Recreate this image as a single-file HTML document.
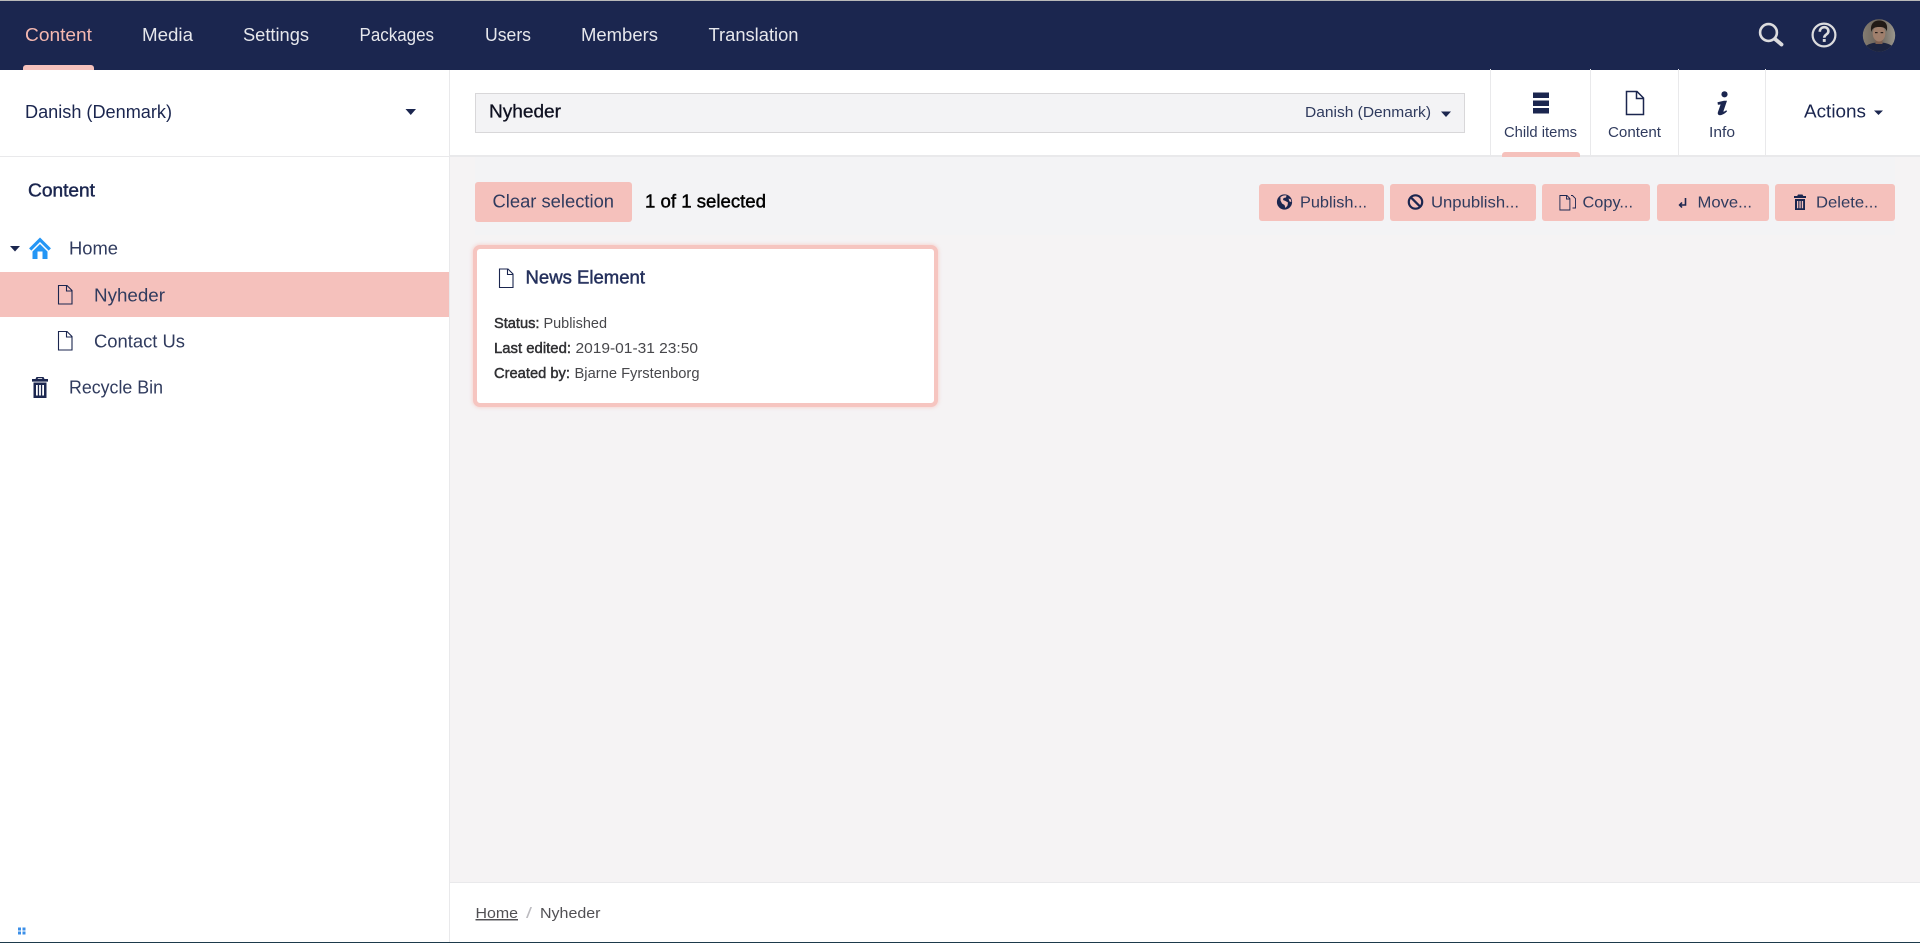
<!DOCTYPE html>
<html lang="en">
<head>
<meta charset="utf-8">
<title>Content</title>
<style>
html,body{margin:0;padding:0;width:1920px;height:943px;overflow:hidden;background:#fff}
div{position:absolute;box-sizing:border-box}
svg{position:absolute;left:0;top:0}
text{font-family:"Liberation Sans",sans-serif;font-size:18.4px;fill:#303b5e}
.nav{fill:#e6e7ec}
.small{font-size:14.7px}
.b{stroke-width:.45}
</style>
</head>
<body>
<!-- frame -->
<div style="left:0;top:0;width:1920px;height:70px;background:#1b264f;border-top:1px solid #b9b9b9"></div>
<div style="left:23px;top:65px;width:71px;height:5px;background:#f5c1bc;border-radius:3px 3px 0 0"></div>
<!-- main area -->
<div style="left:449px;top:70px;width:1px;height:872px;background:#e9e9eb"></div>
<div style="left:0;top:156px;width:450px;height:1px;background:#e9e9eb"></div>
<div style="left:450px;top:157px;width:1470px;height:725px;background:#f5f3f4"></div>
<div style="left:450px;top:155px;width:1470px;height:2px;background:#e9e9eb"></div>
<div style="left:475px;top:157px;width:1420px;height:78px;background:#f3f3f5"></div>
<div style="left:450px;top:882px;width:1470px;height:1px;background:#e9e9eb"></div>
<div style="left:0;top:941.5px;width:1920px;height:1.5px;background:#1d3a4b"></div>
<!-- name input -->
<div style="left:475px;top:93px;width:990px;height:40px;background:#f3f3f5;border:1px solid #d8d7d9"></div>
<!-- tabs -->
<div style="left:1490px;top:69px;width:1px;height:87px;background:#e9e9eb"></div>
<div style="left:1590px;top:69px;width:1px;height:87px;background:#e9e9eb"></div>
<div style="left:1678px;top:69px;width:1px;height:87px;background:#e9e9eb"></div>
<div style="left:1765px;top:69px;width:1px;height:87px;background:#e9e9eb"></div>
<div style="left:1502px;top:152px;width:78px;height:5px;background:#f5c1bc;border-radius:3px 3px 0 0"></div>
<!-- tree selection -->
<div style="left:0;top:272px;width:449px;height:45px;background:#f5c1bc"></div>
<!-- toolbar buttons -->
<div style="left:475px;top:182px;width:157px;height:40px;background:#f5c1bc;border-radius:3px"></div>
<div style="left:1259px;top:184px;width:125px;height:37px;background:#f5c1bc;border-radius:3px"></div>
<div style="left:1390px;top:184px;width:146px;height:37px;background:#f5c1bc;border-radius:3px"></div>
<div style="left:1542px;top:184px;width:108px;height:37px;background:#f5c1bc;border-radius:3px"></div>
<div style="left:1657px;top:184px;width:112px;height:37px;background:#f5c1bc;border-radius:3px"></div>
<div style="left:1775px;top:184px;width:119.5px;height:37px;background:#f5c1bc;border-radius:3px"></div>
<!-- card -->
<div style="left:473px;top:245px;width:465px;height:162px;background:#fff;border:4px solid #f6c5c0;border-radius:7px;box-shadow:0 0 3px 1px rgba(245,193,188,.55)"></div>

<svg width="1920" height="943" viewBox="0 0 1920 943" xmlns="http://www.w3.org/2000/svg">
<!-- nav -->
<text x="25" y="41" textLength="67" lengthAdjust="spacingAndGlyphs" style="fill:#f5b8b0">Content</text>
<text class="nav" x="142" y="41" textLength="51" lengthAdjust="spacingAndGlyphs">Media</text>
<text class="nav" x="243" y="41" textLength="66" lengthAdjust="spacingAndGlyphs">Settings</text>
<text class="nav" x="359.5" y="41" textLength="74.5" lengthAdjust="spacingAndGlyphs">Packages</text>
<text class="nav" x="485" y="41" textLength="46" lengthAdjust="spacingAndGlyphs">Users</text>
<text class="nav" x="581" y="41" textLength="77" lengthAdjust="spacingAndGlyphs">Members</text>
<text class="nav" x="708.5" y="41" textLength="90" lengthAdjust="spacingAndGlyphs">Translation</text>

<!-- search -->
<g fill="none" stroke="#dcdcde">
<circle cx="1768.500" cy="32.500" r="8.400" stroke-width="2.600"/>
<path d="M1775 39L1781.500 44.500" stroke-width="3.800" stroke-linecap="round"/>
</g>
<!-- help -->
<circle cx="1824" cy="35" r="11.400" fill="none" stroke="#dcdcde" stroke-width="2.200"/>
<path d="M1819.800 31.800c0-6 8.600-6 8.600-.6 0 3.400-4.200 3.200-4.200 6.600" fill="none" stroke="#dcdcde" stroke-width="2.600"/>
<rect x="1822.800" y="39" width="2.900" height="2.900" fill="#dcdcde"/>
<!-- avatar -->
<defs>
<clipPath id="av"><circle cx="1879" cy="35.500" r="16.200"/></clipPath>
<linearGradient id="avbg" x1="0" x2="1" y1="0" y2="0"><stop offset="0" stop-color="#857e73"/><stop offset=".5" stop-color="#6b6259"/><stop offset="1" stop-color="#9d9a90"/></linearGradient>
</defs>
<g clip-path="url(#av)">
<rect x="1862" y="19" width="34" height="33" fill="url(#avbg)"/>
<path d="M1862 53c1-8 9-10.500 17-10.500s16 2.500 17 10.500z" fill="#1c2440"/>
<rect x="1875.500" y="38" width="7" height="6" fill="#7d5f50"/>
<ellipse cx="1879" cy="33.500" rx="6.300" ry="8" fill="#a07f6c"/>
<path d="M1871.300 32c-1.500-8 2.500-11.500 8-11.500s9 3 7.500 11c-1-3.500-3-4.500-7.500-4.500s-7 1-8 5z" fill="#211a16"/>
<rect x="1875" y="32" width="2.600" height="1.200" fill="#2a211c"/>
<rect x="1880.600" y="32" width="2.600" height="1.200" fill="#2a211c"/>
</g>

<!-- sidebar header -->
<text x="25" y="118" textLength="147" lengthAdjust="spacingAndGlyphs" style="fill:#1b264f">Danish (Denmark)</text>
<path d="M405.500 109h10.500l-5.250 6z" fill="#1b264f"/>
<text class="b" x="28" y="196.300" textLength="67" lengthAdjust="spacingAndGlyphs" style="fill:#1b264f;stroke:#1b264f">Content</text>

<!-- tree -->
<path d="M10 246h10l-5 5.500z" fill="#1b264f"/>
<path d="M30.200 249.500L40 239.800l9.800 9.700" fill="none" stroke="#2496f5" stroke-width="3.200"/>
<path d="M32.500 251.500L40 244l7.500 7.500V259h-5v-7.500h-5V259h-5z" fill="#2496f5"/>
<text x="69" y="254.400" textLength="49" lengthAdjust="spacingAndGlyphs">Home</text>
<path d="M58.500 285.500h8.500l5 5v13.500H58.500zM66.500 285.500v5.500h5.500" fill="none" stroke="#1b264f" stroke-width="1.100"/>
<text x="94" y="301.400" textLength="71" lengthAdjust="spacingAndGlyphs">Nyheder</text>
<path d="M58.500 331.500h8.500l5 5v13.500H58.500zM66.500 331.500v5.500h5.500" fill="none" stroke="#1b264f" stroke-width="1.100"/>
<text x="94" y="347.400" textLength="91" lengthAdjust="spacingAndGlyphs">Contact Us</text>
<path d="M36.500 377h7l1 2h3.500v2.600H32v-2.600h3.500zM38 378.200l-.4.800h4.800l-.4-.8z" fill="#1b264f" fill-rule="evenodd"/>
<path d="M33.500 382.500h13v15.500h-13zM36 385v10.500h1.800V385zM39.100 385v10.500h1.800V385zM42.200 385v10.500H44V385z" fill="#1b264f" fill-rule="evenodd"/>
<text x="69" y="393.400" textLength="94" lengthAdjust="spacingAndGlyphs">Recycle Bin</text>

<!-- name input -->
<text x="489" y="117.600" textLength="72" lengthAdjust="spacingAndGlyphs" style="fill:#0e1020;stroke:#0e1020;stroke-width:.3">Nyheder</text>
<text class="small" x="1305" y="117" font-size="15" textLength="126" lengthAdjust="spacingAndGlyphs">Danish (Denmark)</text>
<path d="M1441 111.500h10l-5 5.500z" fill="#1b264f"/>

<!-- tabs -->
<path d="M1533 92.500h16v5.500h-16zM1533 100.500h16v5.500h-16zM1533 108h16v5.500h-16z" fill="#1b264f"/>
<text class="small" x="1504" y="137" textLength="73" lengthAdjust="spacingAndGlyphs">Child items</text>
<path d="M1626.500 91.500h10.500l6.500 6.500v16.500h-17zM1636.500 91.500v7h7" fill="none" stroke="#1b264f" stroke-width="1.500"/>
<text class="small" x="1608" y="137" textLength="53" lengthAdjust="spacingAndGlyphs">Content</text>
<circle cx="1724.500" cy="94.300" r="3.100" fill="#1b264f"/>
<path d="M1717.500 102.200l6.500-1.500h3l-3.500 10.300c-.3 1 .6 1 2.700-.7l.9 1c-2.800 2.900-5.300 3.900-7.100 3.900-1.900 0-2.700-1.300-2-3.300l2.600-7.400-2.700.3z" fill="#1b264f"/>
<text class="small" x="1709" y="137" textLength="26" lengthAdjust="spacingAndGlyphs">Info</text>
<text x="1804" y="117.600" textLength="62" lengthAdjust="spacingAndGlyphs" style="fill:#1b264f">Actions</text>
<path d="M1874 110.500h9l-4.500 4.500z" fill="#1b264f"/>

<!-- toolbar -->
<text x="492.500" y="207.300" textLength="121.500" lengthAdjust="spacingAndGlyphs">Clear selection</text>
<text class="b" x="645" y="207.300" textLength="121" lengthAdjust="spacingAndGlyphs" style="fill:#000;stroke:#000">1 of 1 selected</text>

<circle cx="1284.500" cy="202" r="7.600" fill="#1b264f"/>
<path d="M1280.500 197c2-1.500 4-2 6-1.500l-.5 2-2.500.5-.5 2 2.500 1 2.500 1.500-.5 3-2 2.500-1-3-2.500-1.500-1.500-3zM1288.500 198.500l2.500 1 .3 2.500-1.800-.5z" fill="#f5c1bc"/>
<text class="small" x="1300" y="207.300" font-size="16" style="font-size:16px" textLength="67" lengthAdjust="spacingAndGlyphs">Publish...</text>

<circle cx="1415.500" cy="202" r="6.700" fill="none" stroke="#1b264f" stroke-width="2.200"/>
<path d="M1410.800 197.300l9.400 9.400" stroke="#1b264f" stroke-width="2.200"/>
<text class="small" x="1431" y="207.300" style="font-size:16px" textLength="88" lengthAdjust="spacingAndGlyphs">Unpublish...</text>

<path d="M1559.900 195.500h7l3 3v11.500h-10zM1566.500 195.500v3.500h3.500M1571 195.500h1.500l3 3v9.500h-3" fill="none" stroke="#1b264f" stroke-width=".9"/>
<text class="small" x="1582.500" y="207.300" style="font-size:16px" textLength="50.500" lengthAdjust="spacingAndGlyphs">Copy...</text>

<path d="M1685.500 198v7h-5.500M1682 202.500l-2.400 2.500 2.400 2.500" fill="none" stroke="#1b264f" stroke-width="1.600"/>
<text class="small" x="1697.500" y="207.300" style="font-size:16px" textLength="54.500" lengthAdjust="spacingAndGlyphs">Move...</text>

<path d="M1798 194.500h4.500l.8 1.500h2.700v2h-12v-2h3.200z" fill="#1b264f"/>
<path d="M1795 199h10v11h-10zM1797 201v7.300h1.300V201zM1799.400 201v7.300h1.300V201zM1801.800 201v7.300h1.300V201z" fill="#1b264f" fill-rule="evenodd"/>
<text class="small" x="1816" y="207.300" style="font-size:16px" textLength="62" lengthAdjust="spacingAndGlyphs">Delete...</text>

<!-- card -->
<path d="M499.500 269h8.500l5 5v13.500H499.500zM507.500 269v5.500h5.500" fill="none" stroke="#1b264f" stroke-width="1.100"/>
<text class="b" x="525.500" y="283.300" textLength="119.500" lengthAdjust="spacingAndGlyphs" style="fill:#24305c;stroke:#24305c">News Element</text>
<text class="small b" x="494" y="328" textLength="45.500" lengthAdjust="spacingAndGlyphs" style="fill:#303033;stroke:#303033">Status:</text>
<text class="small" x="543.500" y="328" textLength="63.500" lengthAdjust="spacingAndGlyphs" style="fill:#47474b">Published</text>
<text class="small b" x="494" y="353" textLength="77" lengthAdjust="spacingAndGlyphs" style="fill:#303033;stroke:#303033">Last edited:</text>
<text class="small" x="575.500" y="353" textLength="122.500" lengthAdjust="spacingAndGlyphs" style="fill:#47474b">2019-01-31 23:50</text>
<text class="small b" x="494" y="378" textLength="76" lengthAdjust="spacingAndGlyphs" style="fill:#303033;stroke:#303033">Created by:</text>
<text class="small" x="574.500" y="378" textLength="125" lengthAdjust="spacingAndGlyphs" style="fill:#47474b">Bjarne Fyrstenborg</text>

<!-- breadcrumb -->
<text class="small" x="475.500" y="918" textLength="42.500" lengthAdjust="spacingAndGlyphs" style="fill:#515054" text-decoration="underline">Home</text>
<text class="small" x="526" y="918" textLength="6" lengthAdjust="spacingAndGlyphs" style="fill:#bbbabf">/</text>
<text class="small" x="540" y="918" textLength="60.500" lengthAdjust="spacingAndGlyphs" style="fill:#515054">Nyheder</text>

<!-- drag handle -->
<g fill="#3b8fe8">
<rect x="18" y="927.500" width="3" height="3"/><rect x="22.500" y="927.500" width="3" height="3"/>
<rect x="18" y="931.500" width="3" height="3"/><rect x="22.500" y="931.500" width="3" height="3"/>
</g>
</svg>
</body>
</html>
